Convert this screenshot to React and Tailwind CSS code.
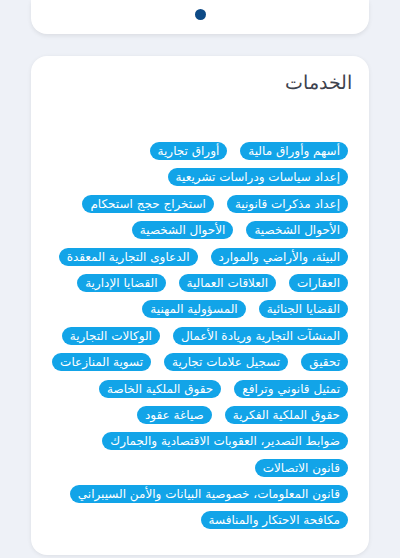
import React from 'react';

const rows = [
  ['أسهم وأوراق مالية', 'أوراق تجارية'],
  ['إعداد سياسات ودراسات تشريعية'],
  ['إعداد مذكرات قانونية', 'استخراج حجج استحكام'],
  ['الأحوال الشخصية', 'الأحوال الشخصية'],
  ['البيئة، والأراضي والموارد', 'الدعاوى التجارية المعقدة'],
  ['العقارات', 'العلاقات العمالية', 'القضايا الإدارية'],
  ['القضايا الجنائية', 'المسؤولية المهنية'],
  ['المنشآت التجارية وريادة الأعمال', 'الوكالات التجارية'],
  ['تحقيق', 'تسجيل علامات تجارية', 'تسوية المنازعات'],
  ['تمثيل قانوني وترافع', 'حقوق الملكية الخاصة'],
  ['حقوق الملكية الفكرية', 'صياغة عقود'],
  ['ضوابط التصدير، العقوبات الاقتصادية والجمارك'],
  ['قانون الاتصالات'],
  ['قانون المعلومات، خصوصية البيانات والأمن السيبراني'],
  ['مكافحة الاحتكار والمنافسة'],
];

function Pill({ label }) {
  return (
    <span className="inline-flex items-center h-[18px] px-2 rounded-full bg-[#12a4e8] text-white text-[12px] leading-none whitespace-nowrap">
      {label}
    </span>
  );
}

export default function App() {
  return (
    <div
      dir="rtl"
      className="min-h-[558px] bg-[#eef1f7] pb-2"
      style={{ fontFamily: '"DejaVu Sans", "Noto Sans", sans-serif' }}
    >
      {/* top card, only its bottom is visible */}
      <div className="mx-[31px] h-[34px] bg-white rounded-b-2xl shadow-[0_2px_4px_rgba(0,0,0,0.08)] flex items-start justify-center">
        <span className="mt-[9px] w-[11px] h-[11px] rounded-full bg-[#0d4a86]" />
      </div>

      <div className="mx-[31px] mt-[22px] bg-white rounded-2xl shadow-[0_1px_4px_rgba(0,0,0,0.08)] pt-[12px] pr-[17px] pl-4 pb-[26px]">
        <h2 className="text-[19px] font-light text-[#3d424d] leading-7">الخدمات</h2>

        <div className="mt-[46px] pr-[4px] flex flex-col gap-[8.4px]">
          {rows.map((row, i) => (
            <div key={i} className="flex gap-[13px]">
              {row.map((label, j) => (
                <Pill key={j} label={label} />
              ))}
            </div>
          ))}
        </div>
      </div>
    </div>
  );
}
